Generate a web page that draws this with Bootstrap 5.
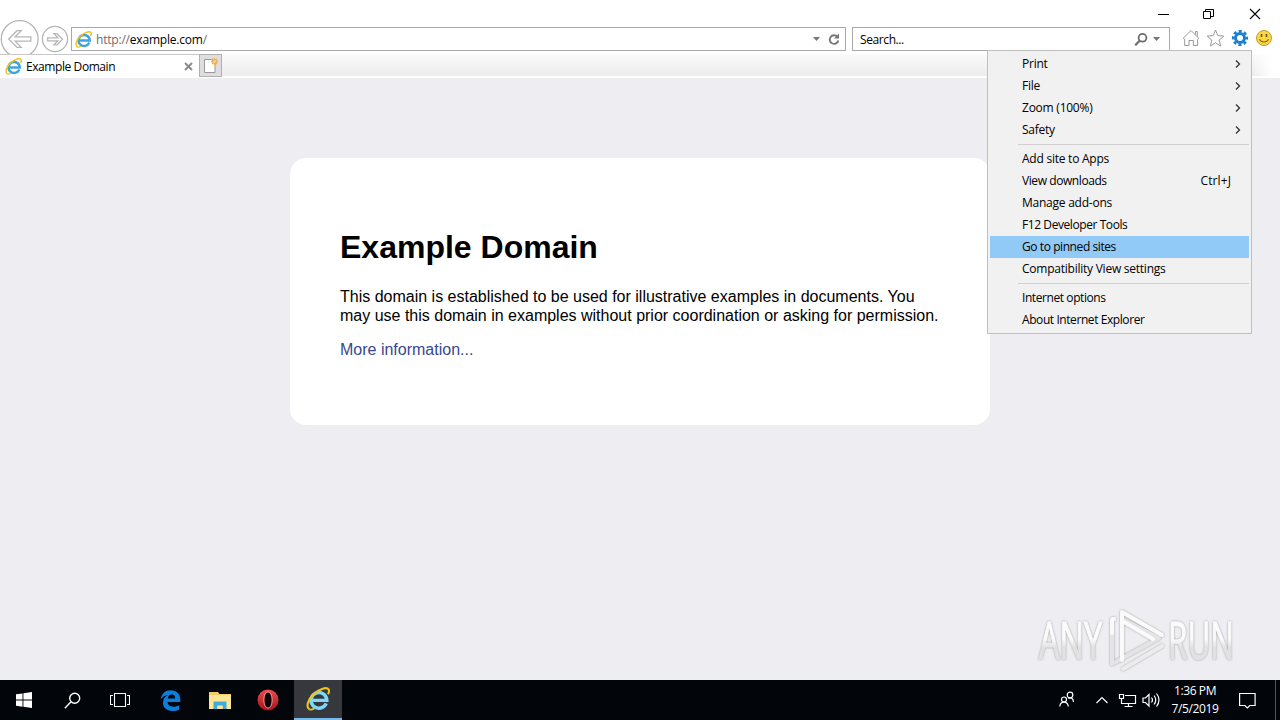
<!DOCTYPE html>
<html lang="en">
<head>
    <meta charset="UTF-8">
    <meta name="viewport" content="width=device-width, initial-scale=1.0">
    <title>Example Domain</title>
    <link rel="stylesheet" href="https://cdn.jsdelivr.net/npm/bootstrap@5.3.0/dist/css/bootstrap.min.css">
    <style>
        body {
            width: 1280px;
            height: 720px;
            overflow: hidden;
            background: #fff;
            color: #000;
            font: 12px/16px "Open Sans", "Noto Sans", sans-serif;
            letter-spacing: -0.24px;
        }
        svg {
            display: block;
            flex: none;
        }
        .title-bar {
            height: 27px;
            gap: 34px;
            padding-right: 19px;
        }
        .nav-bar {
            height: 27px;
        }
        .nav-buttons {
            width: 71px;
            height: 27px;
        }
        .nav-buttons svg {
            margin-top: -8px;
        }
        .field {
            height: 24px;
            border: 1px solid #a9a9a9;
            background: #fff;
        }
        .field > span {
            padding-top: 2px;
        }
        .address {
            width: 775px;
            padding: 0 5px 0 3px;
            margin-right: 6px;
        }
        .address .url {
            color: #6d6d6d;
            letter-spacing: -0.2px;
        }
        .search {
            width: 318px;
            padding: 0 9px 0 7px;
            margin-right: 12px;
            letter-spacing: -0.4px;
        }
        .tab-bar {
            height: 24px;
            background: linear-gradient(90deg, transparent 1252px, #fff 1272px), linear-gradient(#fafafa, #ececec 22px, #fff 22px);
        }
        .page-tab {
            width: 199px;
            height: 24px;
            padding: 0 6px 0 5px;
            background: #fff;
            border-top: 1px solid #c8c8c8;
            letter-spacing: -0.42px;
        }
        .new-tab {
            width: 23px;
            height: 23px;
            border: 1px solid #b0b0b0;
            background: #dedede;
        }
        .page {
            height: 602px;
            background: #eeeef2;
            padding-top: 80px;
            position: relative;
            font-family: "Liberation Sans", Arial, sans-serif;
            font-size: 16px;
            line-height: 19px;
            letter-spacing: 0;
        }
        .domain-box {
            width: 700px;
            height: 267px;
            padding: 71px 50px 49px;
            border: 0;
            border-radius: 16px;
        }
        .domain-box h1 {
            font-size: 32px;
            line-height: 37px;
            font-weight: 700;
            margin: 0 0 21px;
        }
        .domain-box p {
            margin: 0 0 15px;
        }
        .domain-box a {
            color: #38488f;
        }
        .watermark {
            position: absolute;
            left: 1030px;
            top: 525px;
        }
        .tools-menu {
            position: absolute;
            left: 987px;
            top: 50px;
            width: 265px;
            height: 284px;
            padding: 2px;
            background: #f1f1f1;
            border: 1px solid #bfbfbf;
        }
        .tools-menu .item {
            height: 22px;
            padding: 0 8px 0 32px;
        }
        .tools-menu .item.active {
            background: #91c9f7;
        }
        .tools-menu .tight {
            letter-spacing: -0.42px;
        }
        .tools-menu .shortcut {
            margin-right: 10px;
            letter-spacing: 0.1px;
        }
        .tools-menu .divider {
            height: 1px;
            margin: 3px 0 3px 28px;
            background: #d0d0d0;
        }
        .taskbar {
            height: 40px;
            background: #020509;
            color: #fff;
        }
        .task {
            width: 48px;
            height: 40px;
        }
        .task.running {
            background: #36383e;
            border-bottom: 2px solid #76b9ed;
            margin-left: 2px;
        }
        .clock {
            width: 64px;
            line-height: 18px;
            letter-spacing: -0.4px;
        }
        .action-center {
            margin: 0 19px 0 12px;
        }
        .show-desktop {
            width: 5px;
            height: 40px;
            border-left: 1px solid #555;
        }
    </style>
</head>
<body class="d-flex flex-column">
    <!-- shared logo -->
    <svg width="0" height="0" class="position-absolute">
        <defs>
            <symbol id="ie" viewBox="0 0 16 16">
                <path d="M13.500 10.900A5.300 5.200 0 1 1 13.900 8.900H4.500" fill="none" stroke="currentColor" stroke-width="2.300"/>
                <path d="M2.300 14.900C-.3 13.300 1.300 8.300 5.200 4.700S13.800 -.2 15.100 1.600C15.600 2.500 15.300 3.600 14.700 4.800" fill="none" stroke="#edc51e" stroke-width="1.400"/>
                <path d="M2.300 14.900C3.300 15.400 4.500 14.900 5.500 14.300" fill="none" stroke="#edc51e" stroke-width="1.200"/>
            </symbol>
        </defs>
    </svg>

    <div class="title-bar d-flex justify-content-end align-items-center">
        <svg width="11" height="11"><path d="M0 6.500h11" stroke="#000"/></svg>
        <svg width="12" height="11" fill="none" stroke="#000"><path d="M.5 3.500h7v7h-7zM2.500 3.500v-2h8v7h-3"/></svg>
        <svg width="12" height="12" stroke="#000" stroke-width="1.1"><path d="M1 1l10 10M11 1L1 11"/></svg>
    </div>

    <div class="nav-bar d-flex align-items-start">
        <div class="nav-buttons">
            <svg width="71" height="35" fill="none" stroke="#b5b5b5" stroke-width="1.3">
                <circle cx="19.7" cy="20" r="18.4"/>
                <path d="M8.700 20L17 11.700h4.200l-6 6.200h15.600v4.300H15.200l6 6.200H17z"/>
                <circle cx="55" cy="20" r="12.6"/>
                <path d="M62.500 20.300L57 14.700h-3l3.800 4.100H47.700v3h10.100L54 25.900h3z"/>
            </svg>
        </div>
        <div class="address field d-flex align-items-center">
            <svg width="17" height="17" color="#3ea3e0"><use href="#ie"/></svg>
            <span class="url ms-1">http://<span class="text-black">example.com</span>/</span>
            <svg class="ms-auto me-2" width="7" height="4"><path d="M0 0h7L3.500 4z" fill="#777"/></svg>
            <svg width="12" height="13" fill="none" stroke="#777" stroke-width="1.900"><path d="M9.300 3.700A4.300 4.300 0 1 0 10.300 7.500"/><path d="M11 .5v5H6z" fill="#777" stroke="none"/></svg>
        </div>
        <div class="search field d-flex align-items-center">
            <span>Search...</span>
            <svg class="ms-auto me-1" width="15" height="14" fill="none" stroke="#6e6e6e"><circle cx="8.500" cy="5.800" r="3.900" stroke-width="1.800"/><path d="M5.600 8.800L1.200 13.200" stroke-width="2.300"/></svg>
            <svg width="7" height="4"><path d="M0 0h7L3.500 4z" fill="#777"/></svg>
        </div>
        <svg width="98" height="24" fill="none" stroke="#999">
            <path d="M1.200 11.200L9 3.500l7.700 7.700-1.100 1V18.500h-4.200v-5H7v5H2.700v-6.300zM13.500 7.500V4.500h1.800v5"/>
            <path d="M33.500 3l2.300 5.600 6 .5-4.600 4 1.500 5.900-5.200-3.200-5.200 3.200 1.500-5.900-4.600-4 6-.5z"/>
            <g stroke="#1a7fcb">
                <circle cx="58" cy="11" r="4.500" stroke-width="3"/>
                <circle cx="58" cy="11" r="6.900" stroke-width="2.400" stroke-dasharray="3.100 2.320" stroke-dashoffset="1.550"/>
            </g>
            <circle cx="82" cy="11" r="7.500" fill="#fbd640" stroke="#c99a2e"/>
            <path d="M79.500 7v3M84.500 7v3" stroke="#5b4a1c" stroke-width="1.500"/>
            <path d="M77.300 12.300q4.700 5.500 9.400 0" stroke="#7a6120" stroke-width="1.100"/>
        </svg>
    </div>

    <div class="tab-bar d-flex">
        <div class="page-tab d-flex align-items-center">
            <svg width="17" height="17" color="#3ea3e0"><use href="#ie"/></svg>
            <span class="ps-1 flex-fill">Example Domain</span>
            <svg width="9" height="9" stroke="#888" stroke-width="1.900"><path d="M1 1l7 7M8 1L1 8"/></svg>
        </div>
        <div class="new-tab">
            <svg width="21" height="21">
                <path d="M4.500 4.500h7.500l3 4v9H4.500z" fill="#fff" stroke="#999"/>
                <path d="M14.500 3v7M11 6.500h7M12 4l5 5M17 4l-5 5" stroke="#f2a940" stroke-width="1.300"/>
                <circle cx="14.500" cy="6.500" r="1.300" fill="#ffd98a"/>
            </svg>
        </div>
    </div>

    <main class="page">
        <div class="domain-box card mx-auto">
            <h1>Example Domain</h1>
            <p>This domain is established to be used for illustrative examples in documents. You may use this domain in examples without prior coordination or asking for permission.</p>
            <p><a href="#" class="text-decoration-none">More information...</a></p>
        </div>

        <svg class="watermark" width="250" height="75">
            <defs>
                <linearGradient id="fade" x1="0" y1="0" x2="0" y2="1">
                    <stop offset=".5" stop-color="#fbfbfc"/>
                    <stop offset=".62" stop-color="#e2e2e4"/>
                </linearGradient>
                <filter id="soft" x="-10%" y="-10%" width="120%" height="120%">
                    <feDropShadow dx="0" dy="0" stdDeviation="1.300" flood-color="#888" flood-opacity=".8"/>
                </filter>
            </defs>
            <g filter="url(#soft)">
                <g font-family="Open Sans, Noto Sans, sans-serif" font-size="51" letter-spacing="0" fill="url(#fade)" stroke="url(#fade)" stroke-width="1">
                    <text x="9" y="56" textLength="63" lengthAdjust="spacingAndGlyphs">ANY</text>
                    <text x="138" y="56" textLength="66" lengthAdjust="spacingAndGlyphs">RUN</text>
                </g>
                <g fill="none" stroke="#fafafb" stroke-width="4" stroke-linecap="round" stroke-linejoin="round">
                    <path d="M84 16q-2 0-2 2V61l47-26L94 17" stroke="#e4e4e6"/>
                    <path d="M92 57V9l40 23"/>
                    <path d="M84 16q-2 0-2 2V30"/>
                    <path d="M94 19l29 17"/>
                    <path d="M93 66l39-23" stroke="#ececee"/>
                </g>
            </g>
        </svg>
    </main>

    <div class="tools-menu">
        <div class="item d-flex align-items-center justify-content-between">Print <svg width="6" height="8" fill="none" stroke="#333" stroke-width="1.300"><path d="M1 .5L4.500 4 1 7.500"/></svg></div>
        <div class="item d-flex align-items-center justify-content-between">File <svg width="6" height="8" fill="none" stroke="#333" stroke-width="1.300"><path d="M1 .5L4.500 4 1 7.500"/></svg></div>
        <div class="item d-flex align-items-center justify-content-between">Zoom (100%) <svg width="6" height="8" fill="none" stroke="#333" stroke-width="1.300"><path d="M1 .5L4.500 4 1 7.500"/></svg></div>
        <div class="item d-flex align-items-center justify-content-between">Safety <svg width="6" height="8" fill="none" stroke="#333" stroke-width="1.300"><path d="M1 .5L4.500 4 1 7.500"/></svg></div>
        <div class="divider"></div>
        <div class="item d-flex align-items-center">Add site to Apps</div>
        <div class="item d-flex align-items-center justify-content-between"><span class="tight">View downloads</span> <span class="shortcut">Ctrl+J</span></div>
        <div class="item d-flex align-items-center">Manage add-ons</div>
        <div class="item tight d-flex align-items-center">F12 Developer Tools</div>
        <div class="item active tight d-flex align-items-center">Go to pinned sites</div>
        <div class="item d-flex align-items-center">Compatibility View settings</div>
        <div class="divider"></div>
        <div class="item tight d-flex align-items-center">Internet options</div>
        <div class="item tight d-flex align-items-center">About Internet Explorer</div>
    </div>

    <footer class="taskbar d-flex align-items-center">
        <div class="task d-flex align-items-center justify-content-center">
            <svg width="16" height="16" fill="#fff"><path d="M0 2.300L6.500 1.400v6.200H0zM7.400 1.200L16 0v7.600H7.400zM0 8.500h6.500v6.200L0 13.800zM7.400 8.500H16V16l-8.600-1.200z"/></svg>
        </div>
        <div class="task d-flex align-items-center justify-content-center">
            <svg width="17" height="17" fill="none" stroke="#fff" stroke-width="1.400"><circle cx="10.700" cy="6.200" r="5"/><path d="M7.100 9.800L.8 16.200"/></svg>
        </div>
        <div class="task d-flex align-items-center justify-content-center">
            <svg width="20" height="14" fill="none" stroke="#fff" stroke-width="1.100"><path d="M4.500.5h11v13h-11zM3 2.500H.5v9H3M17 2.500h2.500v9H17"/></svg>
        </div>
        <div class="task d-flex align-items-center justify-content-center ms-1">
            <svg width="21" height="21" class="me-1"><path d="M.7 9.300C1.500 3.400 5.500 .2 10.700 .2c6 0 9.600 4.200 9.600 9.300v2.600H7.500c.2 3 2.700 4.600 5.900 4.600 2.200 0 4.300-.6 5.800-1.500v4.200c-1.800 1-4.200 1.500-6.800 1.500C6.500 20.900 3 17.400 3 12.700c0-3.500 1.900-6.300 5-7.700C4.900 5.400 2.300 6.800.7 9.300zM7.700 8.500h7.500c0-2.500-1.200-4-3.600-4-2.200 0-3.600 1.500-3.900 4z" fill="#0b7fde"/></svg>
        </div>
        <div class="task d-flex align-items-center justify-content-center">
            <svg width="22" height="19"><path d="M0 1h9l1.500 2H22v15H0z" fill="#f3ce63"/><path d="M0 4h22v14H0z" fill="#fde694"/><path d="M4.500 18v-7.500h13V18h-3.700v-3.500H8.200V18z" fill="#42a9de"/></svg>
        </div>
        <div class="task d-flex align-items-center justify-content-center">
            <svg width="22" height="22">
                <defs><linearGradient id="operaRed" x1="0" y1="0" x2="0" y2="1"><stop offset="0" stop-color="#ef4c4d"/><stop offset="1" stop-color="#a51218"/></linearGradient></defs>
                <circle cx="11" cy="11" r="10.500" fill="url(#operaRed)"/>
                <ellipse cx="11" cy="11" rx="3.800" ry="7.800" fill="#120304"/>
                <ellipse cx="11" cy="11" rx="4.200" ry="8.200" fill="none" stroke="#f0b1ad" stroke-width=".8"/>
            </svg>
        </div>
        <div class="task running d-flex align-items-center justify-content-center">
            <svg width="24" height="24" color="#7bd9f7"><use href="#ie"/></svg>
        </div>

        <!-- tray -->
        <svg class="ms-auto" width="104" height="20" fill="none" stroke="#fff" stroke-width="1.200">
            <circle cx="11" cy="5" r="2.800"/><path d="M9 8.300q5-2 5.500 3.700"/>
            <circle cx="5" cy="9.500" r="2.500"/><path d="M.8 16.500q.4-4.300 4.200-4.300t4.300 4.300"/>
            <path d="M37.500 13l5.500-5.500 5.500 5.500"/>
            <path d="M66 5.500h10.500v8H62.500V9.500M69.500 13.500v3M65.500 16.500h8M60.500 4.500h4v4h-4zM62.500 8.500v2"/>
            <path d="M84 8h2.500l3.500-3.500v11.500L86.500 12.500H84zM92.500 7.500q2 2.500 0 5M95 5.500q3.500 4.500 0 9M97.500 3.500q5 6.500 0 13"/>
        </svg>
        <div class="clock text-center">1:36 PM<br>7/5/2019</div>
        <svg class="action-center" width="17" height="17" fill="none" stroke="#fff" stroke-width="1.200"><path d="M.6 1.500h15.500v12h-5.300L8.300 16l-2.500-2.500H.6z"/></svg>
        <div class="show-desktop"></div>
    </footer>

    <script src="https://cdn.jsdelivr.net/npm/bootstrap@5.3.0/dist/js/bootstrap.bundle.min.js"></script>
</body>
</html>
